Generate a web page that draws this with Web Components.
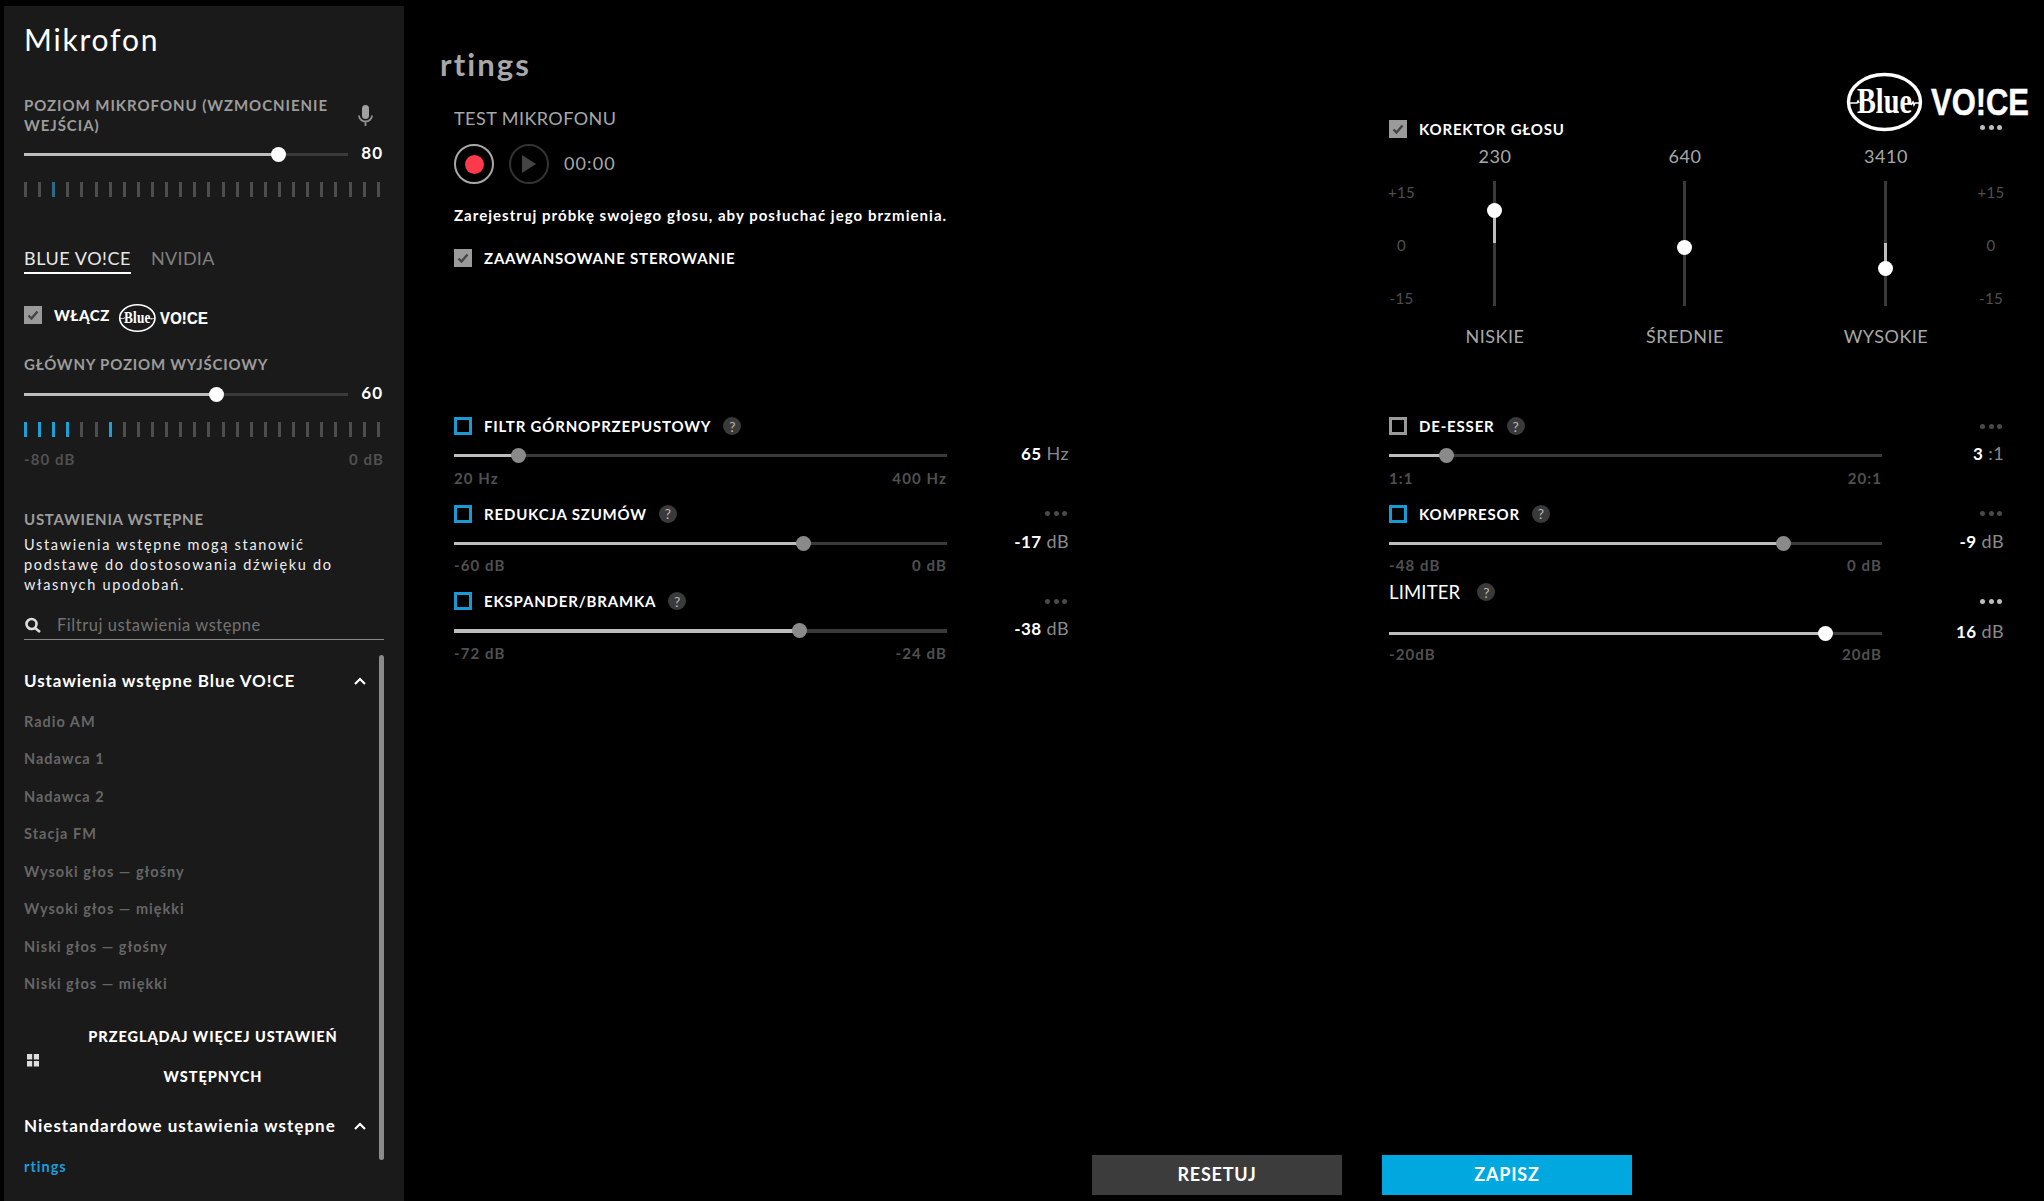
<!DOCTYPE html>
<html lang="pl">
<head>
<meta charset="utf-8">
<title>Mikrofon</title>
<style>
  html, body { margin: 0; height: 1201px; background: #000; overflow: hidden; }
  body { font-family: Lato, "Open Sans", "Liberation Sans", sans-serif; color: #fff; }
</style>
</head>
<body>
<g-app>
  <g-sidebar slot="side">
    <g-preset-group slot="presets" heading="Ustawienia wstępne Blue VO!CE">
      <g-preset>Radio AM</g-preset>
      <g-preset>Nadawca 1</g-preset>
      <g-preset>Nadawca 2</g-preset>
      <g-preset>Stacja FM</g-preset>
      <g-preset>Wysoki głos — głośny</g-preset>
      <g-preset>Wysoki głos — miękki</g-preset>
      <g-preset>Niski głos — głośny</g-preset>
      <g-preset>Niski głos — miękki</g-preset>
      <g-browse slot="after">PRZEGLĄDAJ WIĘCEJ USTAWIEŃ WSTĘPNYCH</g-browse>
    </g-preset-group>
    <g-preset-group slot="presets" heading="Niestandardowe ustawienia wstępne" custom>
      <g-preset active>rtings</g-preset>
    </g-preset-group>
  </g-sidebar>
  <g-main slot="main">
    <g-mic-test slot="left"></g-mic-test>
    <g-equalizer slot="right"></g-equalizer>
    <g-fx slot="fx" check="blue" pos="13" min="20 Hz" max="400 Hz" value="65" unit="Hz">FILTR GÓRNOPRZEPUSTOWY</g-fx>
    <g-fx slot="fx" check="gray" pos="11.6" min="1:1" max="20:1" value="3" unit=":1" dots>DE-ESSER</g-fx>
    <g-fx slot="fx" check="blue" pos="70.8" min="-60 dB" max="0 dB" value="-17" unit="dB" dots>REDUKCJA SZUMÓW</g-fx>
    <g-fx slot="fx" check="blue" pos="80.1" min="-48 dB" max="0 dB" value="-9" unit="dB" dots>KOMPRESOR</g-fx>
    <g-fx slot="fx" check="blue" pos="70" min="-72 dB" max="-24 dB" value="-38" unit="dB" dots thick>EKSPANDER/BRAMKA</g-fx>
    <g-fx slot="fx" pos="88.6" min="-20dB" max="20dB" value="16" unit="dB" dots limiter>LIMITER</g-fx>
  </g-main>
</g-app>

<script>
const mount = (el, css, html) => {
  const template = document.createElement('template')
  template.innerHTML = `<style>${css}</style>${html}`
  el.shadowRoot.appendChild(template.content.cloneNode(true))
}

class Base extends HTMLElement {
  constructor() {
    super();
    this.attachShadow({ mode: 'open' });
  }
}

customElements.define('g-app', class extends Base {
  connectedCallback() {
    mount(this, `
      :host { display: grid; grid-template-columns: 404px 1fr; height: 1201px; }
    `, `<slot name="side"></slot><slot name="main"></slot>`)
  }
})

customElements.define('g-check', class extends Base {
  connectedCallback() {
    const state = this.getAttribute('state') || 'on'
    const border = state === 'blue' ? '#1a9ad2' : '#9a9a9a'
    const tick = state === 'on'
      ? `<svg width="18" height="18" viewBox="0 0 18 18"><path d="M4.5 9.5l3 3 6-7" fill="none" stroke="#444" stroke-width="2.4"/></svg>`
      : ''
    mount(this, `
      :host { display: block; flex: none; width: 18px; height: 18px; box-sizing: border-box;
        ${state === 'on' ? 'background:#9a9a9a;' : `border: 3px solid ${border};`} }
      svg { display: block; }
    `, tick)
  }
})

customElements.define('g-help', class extends Base {
  connectedCallback() {
    mount(this, `
      :host { display: flex; flex: none; width: 18px; height: 18px; border-radius: 50%;
        background: #3a3a3a; color: #b8b8b8; font-size: 14px; font-weight: 400; letter-spacing: 0;
        align-items: center; justify-content: center; }
    `, `?`)
  }
})

customElements.define('g-dots', class extends Base {
  connectedCallback() {
    mount(this, `
      :host { display: flex; gap: 3.5px; margin-right: 2px; }
      i { width: 5px; height: 5px; border-radius: 50%; background: ${this.hasAttribute('bright') ? '#bdbdbd' : '#4a4a4a'}; }
    `, `<i></i><i></i><i></i>`)
  }
})

customElements.define('g-slider', class extends Base {
  connectedCallback() {
    const pos = this.getAttribute('pos') || 0
    const thumb = this.getAttribute('thumb') || '#fff'
    const h = this.hasAttribute('thick') ? 4 : 3
    mount(this, `
      :host { display: block; position: relative; height: 20px; }
      .track { position: absolute; left: 0; right: 0; top: ${10 - h / 2}px; height: ${h}px; background: #3a3a3a; }
      .fill { position: absolute; left: 0; top: ${10 - h / 2}px; height: ${h}px; width: ${pos}%; background: #bdbdbd; }
      .thumb { position: absolute; left: ${pos}%; top: 2.5px; width: 15px; height: 15px; margin-left: -7.5px;
        border-radius: 50%; background: ${thumb}; }
    `, `<div class="track"></div><div class="fill"></div><div class="thumb"></div>`)
  }
})

customElements.define('g-ticks', class extends Base {
  connectedCallback() {
    const lit = (this.getAttribute('lit') || '').split(',').filter(Boolean).map(Number)
    const dim = (this.getAttribute('dim') || '').split(',').filter(Boolean).map(Number)
    let html = ''
    for (let i = 0; i < 26; i++) {
      html += `<i class="${lit.includes(i) ? 'lit' : dim.includes(i) ? 'dim' : ''}"></i>`
    }
    mount(this, `
      :host { display: flex; justify-content: space-between; height: 15px; width: 356px; }
      i { width: 3px; background: #4d4d4d; }
      .lit { background: #1e9fd6; }
      .dim { background: #2b6a88; }
    `, html)
  }
})

customElements.define('g-logo', class extends Base {
  connectedCallback() {
    const w = this.getAttribute('width')
    const h = this.getAttribute('height')
    mount(this, `
      :host { display: block; flex: none; width: ${w}px; height: ${h}px; }
      svg { display: block; overflow: visible; }
      text { fill: #fff; }
      .blue { font: 700 35px "Liberation Serif", serif; }
      .voice { font: 700 36px "Liberation Sans", sans-serif; stroke: #fff; stroke-width: .5px; }
    `, `<svg width="${w}" height="${h}" viewBox="0 0 182 58" preserveAspectRatio="none">
      <ellipse cx="37.5" cy="29" rx="36" ry="27.5" fill="none" stroke="#fff" stroke-width="3.4"/>
      <path d="M2 30h8l1-2 1 2M64 32l2-3 1 3 1-2h6" fill="none" stroke="#fff" stroke-width="1.5"/>
      <text class="blue" x="10" y="40" textLength="55" lengthAdjust="spacingAndGlyphs">Blue</text>
      <text class="voice" x="84" y="42" textLength="98" lengthAdjust="spacingAndGlyphs">VO!CE</text>
    </svg>`)
  }
})

customElements.define('g-preset', class extends Base {
  connectedCallback() {
    mount(this, `
      :host { display: block; height: 37.5px; line-height: 37.5px; font-size: 14.5px; font-weight: 700;
        letter-spacing: 1px; color: ${this.hasAttribute('active') ? '#1d9ddb' : '#666'}; }
    `, `<slot></slot>`)
  }
})

customElements.define('g-browse', class extends Base {
  connectedCallback() {
    mount(this, `
      :host { display: flex; align-items: center; margin-top: 14px; }
      svg { flex: none; margin: 8px 15px 0 3px; }
      div { width: 318px; text-align: center; line-height: 40px; font-size: 14.5px; font-weight: 900; letter-spacing: .95px; }
    `, `<svg width="12" height="13" viewBox="0 0 12 13" fill="#ddd">
        <rect x="0" y="0" width="5.2" height="5.5"/><rect x="6.8" y="0" width="5.2" height="5.5"/>
        <rect x="0" y="7" width="5.2" height="5.5"/><rect x="6.8" y="7" width="5.2" height="5.5"/>
      </svg><div><slot></slot></div>`)
  }
})

customElements.define('g-preset-group', class extends Base {
  connectedCallback() {
    const custom = this.hasAttribute('custom')
    mount(this, `
      :host { display: block; margin-top: ${custom ? 17 : 28.5}px; }
      header { display: flex; align-items: center; justify-content: space-between; height: 24px;
        font-size: 17px; font-weight: 700; letter-spacing: ${custom ? 1 : .9}px; padding-right: 18px; white-space: nowrap; }
      .list { margin-top: 10px; }
    `, `<header><span>${this.getAttribute('heading')}</span>
        <svg width="12" height="8" viewBox="0 0 12 8"><path d="M1 7l5-5 5 5" fill="none" stroke="#fff" stroke-width="2.2"/></svg></header>
      <div class="list"><slot></slot></div><slot name="after"></slot>`)
  }
})

customElements.define('g-sidebar', class extends Base {
  connectedCallback() {
    mount(this, `
      :host { display: block; position: relative; box-sizing: border-box; margin: 6px 0 0 4px; width: 400px; height: 1195px;
        padding: 13px 20px 0; background: #1a1a1a; }
      h1 { margin: 0; font-size: 30px; line-height: 40px; font-weight: 400; letter-spacing: 1.8px; color: #fff; }
      .cap { font-size: 15px; line-height: 20px; letter-spacing: .95px; color: #9c9c9c; font-weight: 700; }
      .gain { display: flex; justify-content: space-between; align-items: center; margin-top: 36px; }
      .gain .cap { width: 330px; }
      .gain svg { margin-right: 11px; }
      .level { display: flex; justify-content: space-between; align-items: center; margin-top: 9px; }
      .level g-slider { width: 324px; }
      .level b { font-size: 17px; line-height: 20px; letter-spacing: 1px; margin: -2px 1px 0 0; }
      g-ticks { margin-top: 18px; }
      .tabs { display: flex; gap: 20px; margin-top: 49px; font-size: 18px; line-height: 24px; letter-spacing: .55px; }
      .tabs span { color: #808080; letter-spacing: .3px; }
      .tabs .on { color: #e8e8e8; padding-bottom: 2px; border-bottom: 2px solid #fff; letter-spacing: .55px; }
      .enable { display: flex; align-items: center; margin-top: 32px; height: 18px; font-size: 15px; font-weight: 900; letter-spacing: .6px; }
      .enable span { margin: 0 9px 0 12px; }
      .enable g-logo { margin-top: 5px; }
      .output { margin-top: 30px; letter-spacing: .8px; }
      .range { display: flex; justify-content: space-between; margin-top: 12px; font-size: 15px; line-height: 20px;
        letter-spacing: 1.1px; font-weight: 700; color: #505050; }
      .presets { margin-top: 40px; letter-spacing: .75px; }
      .desc { margin-top: 6px; font-size: 14.5px; line-height: 20px; letter-spacing: 1.68px; color: #eee; white-space: nowrap; }
      .search { display: flex; align-items: center; gap: 15px; height: 29px; margin-top: 15px; border-bottom: 1px solid #888;
        font-size: 16.5px; letter-spacing: .55px; color: #727272; }
      .bar { position: absolute; left: 375px; top: 649px; width: 5px; height: 505px; border-radius: 3px; background: #8a8a8a; }
    `, `
      <h1>Mikrofon</h1>
      <div class="gain">
        <div class="cap">POZIOM MIKROFONU (WZMOCNIENIE WEJŚCIA)</div>
        <svg width="15" height="21" viewBox="0 0 15 21" fill="none" stroke="#929292">
          <rect x="4" y="0" width="7" height="14" rx="3.5" fill="#a0a0a0" stroke="none"/>
          <path d="M1 10.5a6.5 6 0 0 0 13 0M7.5 16.5v4.5" stroke-width="1.8"/>
        </svg>
      </div>
      <div class="level"><g-slider pos="78.5"></g-slider><b>80</b></div>
      <g-ticks dim="2"></g-ticks>
      <div class="tabs"><span class="on">BLUE VO!CE</span><span>NVIDIA</span></div>
      <div class="enable"><g-check></g-check><span>WŁĄCZ</span><g-logo width="89" height="28"></g-logo></div>
      <div class="cap output">GŁÓWNY POZIOM WYJŚCIOWY</div>
      <div class="level" style="margin-top:10px"><g-slider pos="59.3"></g-slider><b>60</b></div>
      <g-ticks lit="0,1,2,3,6"></g-ticks>
      <div class="range"><span>-80 dB</span><span>0 dB</span></div>
      <div class="cap presets">USTAWIENIA WSTĘPNE</div>
      <div class="desc">Ustawienia wstępne mogą stanowić<br>podstawę do dostosowania dźwięku do<br>własnych upodobań.</div>
      <div class="search">
        <svg width="18" height="16" viewBox="0 0 18 16" fill="none" stroke="#ddd" stroke-width="2.6">
          <circle cx="7.5" cy="7" r="5"/><path d="M11 11l5 4"/>
        </svg>
        <span>Filtruj ustawienia wstępne</span>
      </div>
      <slot name="presets"></slot>
      <div class="bar"></div>
    `)
  }
})

customElements.define('g-mic-test', class extends Base {
  connectedCallback() {
    mount(this, `
      :host { display: block; padding: 21px 0 0 14px; }
      .title { font-size: 18px; line-height: 24px; letter-spacing: .45px; color: #a8a8a8; }
      .controls { display: flex; align-items: center; gap: 15px; margin-top: 14px; height: 40px; }
      .round { box-sizing: border-box; width: 40px; height: 40px; border-radius: 50%; display: flex; align-items: center; justify-content: center; }
      .rec { border: 2.5px solid #a8a8a8; }
      .rec i { width: 19px; height: 19px; border-radius: 50%; background: #fc3a4b; }
      .play { border: 2.5px solid #333; }
      .time { font-size: 18px; letter-spacing: 1.1px; color: #a8a8a8; margin-top: -2px; }
      p { margin: 21px 0 0; font-size: 15px; line-height: 20px; font-weight: 700; letter-spacing: 1.04px; }
      .adv { display: flex; align-items: center; gap: 12px; margin-top: 24px; font-size: 15px; font-weight: 700; letter-spacing: .8px; }
    `, `
      <div class="title">TEST MIKROFONU</div>
      <div class="controls">
        <div class="round rec"><i></i></div>
        <div class="round play"><svg width="16" height="20" viewBox="0 0 16 20"><path d="M1 1l14 9-14 9z" fill="#444"/></svg></div>
        <span class="time">00:00</span>
      </div>
      <p>Zarejestruj próbkę swojego głosu, aby posłuchać jego brzmienia.</p>
      <div class="adv"><g-check></g-check>ZAAWANSOWANE STEROWANIE</div>
    `)
  }
})

customElements.define('g-band', class extends Base {
  connectedCallback() {
    const y = Number(this.getAttribute('y'))
    const top = Math.min(y, 62)
    const len = Math.abs(y - 62)
    const fill = this.hasAttribute('flat') ? 0 : len
    mount(this, `
      :host { display: flex; flex-direction: column; align-items: center; font-size: 18px; line-height: 24px;
        letter-spacing: .5px; color: #a8a8a8; margin-top: -1px; }
      .rail { position: relative; width: 3px; height: 125px; margin: 13px 2px 18px 0; background: #3a3a3a; }
      .fill { position: absolute; left: 0; width: 3px; top: ${top}px; height: ${fill}px; background: #bdbdbd; }
      .thumb { position: absolute; left: -6px; top: ${y - 7.5}px; width: 15px; height: 15px; border-radius: 50%; background: #fff; }
    `, `<div>${this.getAttribute('freq')}</div>
      <div class="rail"><div class="fill"></div><div class="thumb"></div></div>
      <div><slot></slot></div>`)
  }
})

customElements.define('g-equalizer', class extends Base {
  connectedCallback() {
    const scale = `<span>+15</span><span>0</span><span>-15</span>`
    mount(this, `
      :host { display: block; position: relative; padding-top: 35px; }
      .logo { position: absolute; left: 458px; top: -12px; }
      .head { display: flex; align-items: center; height: 18px; font-size: 15px; font-weight: 700; letter-spacing: .8px; gap: 12px; }
      .head g-dots { margin-left: auto; margin-top: -3px; }
      .grid { display: grid; grid-template-columns: 25px 162px 218px 184px 26px; margin-top: 7px; }
      .scale { display: flex; flex-direction: column; align-items: center; padding-top: 37px; gap: 33px; font-size: 15px; line-height: 20px; color: #505050; letter-spacing: .3px; }
    `, `
      <g-logo class="logo" width="182" height="58"></g-logo>
      <div class="head"><g-check></g-check>KOREKTOR GŁOSU<g-dots bright></g-dots></div>
      <div class="grid">
        <div class="scale">${scale}</div>
        <g-band freq="230" y="29">NISKIE</g-band>
        <g-band freq="640" y="66" flat>ŚREDNIE</g-band>
        <g-band freq="3410" y="87">WYSOKIE</g-band>
        <div class="scale">${scale}</div>
      </div>
    `)
  }
})

customElements.define('g-fx', class extends Base {
  connectedCallback() {
    const state = this.getAttribute('check')
    const limiter = this.hasAttribute('limiter')
    mount(this, `
      :host { display: grid; grid-template-columns: 493px 1fr; height: 87.5px; align-content: start; }
      .head { display: flex; align-items: center; gap: 12px; height: 18px; font-size: 15px; font-weight: 700; letter-spacing: .82px; white-space: nowrap; }
      .head.big { font-size: 18.5px; font-weight: 400; letter-spacing: .15px; gap: 17px; margin-top: -9px; height: 18px; }
      .dots { display: flex; justify-content: flex-end; align-items: center; height: 18px; }
      g-slider { grid-column: 1; margin-top: ${limiter ? 13.5 : 10.5}px; }
      .value { grid-column: 2; justify-self: end; margin-top: ${limiter ? 11 : 8}px; font-size: 18px; line-height: 20px; color: #8a8a8a; letter-spacing: .4px; }
      .value b { font-size: 17px; color: #fff; }
      .range { grid-column: 1; display: flex; justify-content: space-between; margin-top: ${limiter ? 0 : 2}px; font-size: 15px; line-height: 20px;
        letter-spacing: 1.1px; font-weight: 700; color: #505050; }
    `, `
      <div class="head ${limiter ? 'big' : ''}">${state ? `<g-check state="${state}"></g-check>` : ''}<span><slot></slot></span><g-help></g-help></div>
      <div class="dots">${this.hasAttribute('dots') ? `<g-dots ${limiter ? 'bright' : ''}></g-dots>` : ''}</div>
      <g-slider pos="${this.getAttribute('pos')}" thumb="${limiter ? '#fff' : '#8a8a8a'}" ${this.hasAttribute('thick') ? 'thick' : ''}></g-slider>
      <div class="value"><b>${this.getAttribute('value')}</b> ${this.getAttribute('unit')}</div>
      <div class="range"><span>${this.getAttribute('min')}</span><span>${this.getAttribute('max')}</span></div>
    `)
  }
})

customElements.define('g-main', class extends Base {
  connectedCallback() {
    mount(this, `
      :host { display: flex; flex-direction: column; height: 1201px; box-sizing: border-box; padding: 44px 0 6px 36px; }
      h2 { margin: 0; font-size: 31px; line-height: 40px; font-weight: 700; letter-spacing: 2.1px; color: #a8a8a8; }
      .top { display: grid; grid-template-columns: 949px 615px; margin-top: 1px; height: 332px; }
      .fx { display: grid; grid-template-columns: 615px 615px; column-gap: 320px; padding-left: 14px; }
      footer { display: flex; gap: 40px; margin-top: auto; padding-left: 652px; }
      button { width: 250px; height: 40px; border: 0; padding: 0 0 2px; font: 700 18px Lato, sans-serif; letter-spacing: .8px; color: #fff; }
      .reset { background: #3c3c3c; }
      .save { background: #00a8e0; }
    `, `
      <h2>rtings</h2>
      <div class="top"><slot name="left"></slot><slot name="right"></slot></div>
      <div class="fx"><slot name="fx"></slot></div>
      <footer><button class="reset">RESETUJ</button><button class="save">ZAPISZ</button></footer>
    `)
  }
})
</script>
</body>
</html>
